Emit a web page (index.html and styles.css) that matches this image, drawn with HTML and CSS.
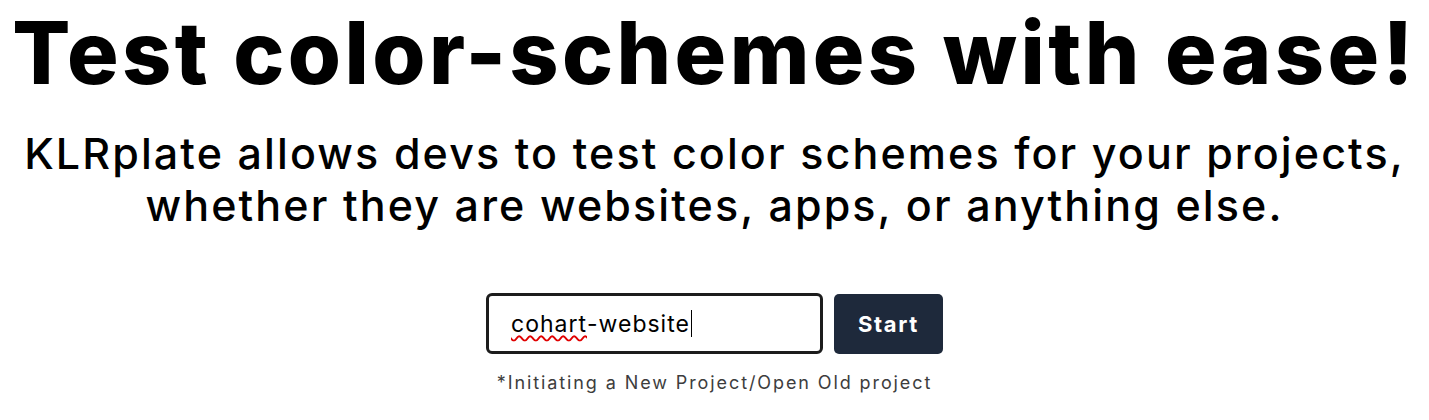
FILE: index.html
```html
<!DOCTYPE html>
<html lang="en">
<head>
<meta charset="utf-8">
<title>KLRplate</title>
<link rel="stylesheet" href="styles.css">
</head>
<body>
<main class="hero">
  <h1 class="title">Test color-schemes with ease!</h1>
  <p class="lead">KLRplate allows devs to test color schemes for your projects,<br>whether they are websites, apps, or anything else.</p>
  <form class="start-form">
    <div class="field" role="textbox" aria-label="Project name"><span class="misspelled">cohart</span>-website<span class="caret"></span></div>
    <button type="button" class="start-btn">Start</button>
  </form>
  <p class="note">*Initiating a New Project/Open Old project</p>
</main>
</body>
</html>
```
FILE: styles.css
```css
html, body {
  margin: 0;
  padding: 0;
  background: #ffffff;
}
body {
  font-family: "Inter", "DejaVu Sans", sans-serif;
  color: #000;
}
.hero {
  display: flex;
  flex-direction: column;
  align-items: center;
  text-align: center;
}
.title {
  margin: 3px 0 0;
  font-size: 86px;
  line-height: 100px;
  font-weight: 800;
  letter-spacing: 3.4px;
  white-space: nowrap;
}
.lead {
  margin: 24px 0 0;
  font-size: 43px;
  line-height: 52px;
  font-weight: 500;
  letter-spacing: 2.1px;
  white-space: nowrap;
}
.start-form {
  margin-top: 62px;
  display: flex;
  gap: 11px;
  align-items: center;
}
.field {
  box-sizing: border-box;
  width: 337px;
  height: 61px;
  border: 3px solid #1c1c1c;
  border-radius: 6px;
  padding: 0 22px;
  display: flex;
  align-items: center;
  font-size: 23px;
  letter-spacing: 1px;
  color: #000;
  text-align: left;
}
.misspelled {
  text-decoration: underline wavy #e00000;
  text-decoration-thickness: 1.5px;
  text-underline-offset: 3px;
}
.caret {
  display: inline-block;
  width: 1px;
  height: 27px;
  background: #000;
  margin-left: 1px;
}
.start-btn {
  box-sizing: border-box;
  width: 109px;
  height: 60px;
  border: none;
  border-radius: 5px;
  background: #1e293b;
  color: #fff;
  font-family: inherit;
  font-size: 22px;
  font-weight: 700;
  letter-spacing: 1.6px;
  cursor: pointer;
}
.note {
  margin: 17px 0 0;
  font-size: 18px;
  line-height: 24px;
  letter-spacing: 1.9px;
  color: #3d3d3d;
}
```
